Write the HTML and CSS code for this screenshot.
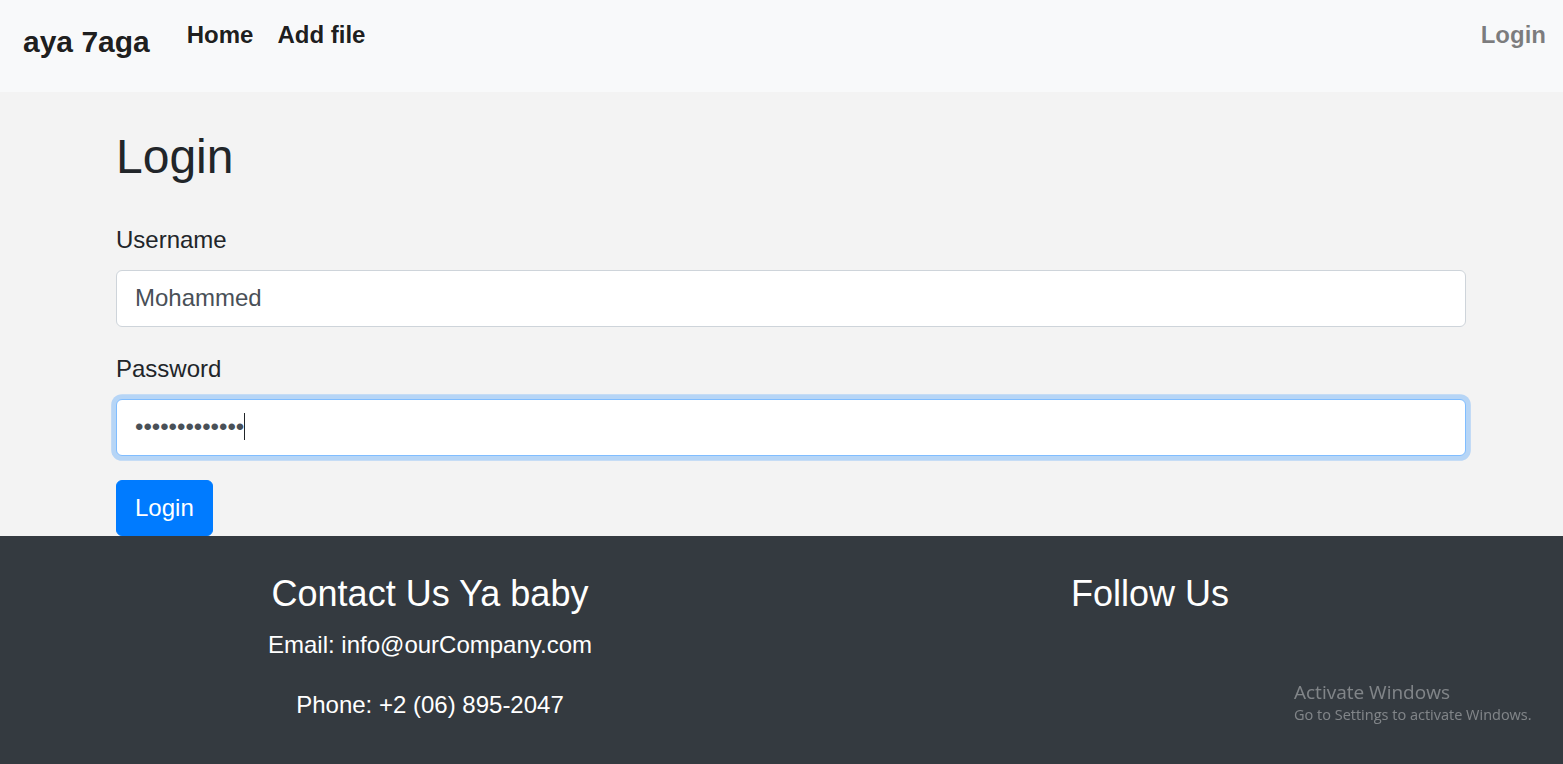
FILE: index.html
```html
<!DOCTYPE html>
<html lang="en">
<head>
<meta charset="utf-8">
<title>Login</title>
<link rel="stylesheet" href="styles.css">
</head>
<body>
<nav class="navbar">
  <a class="brand" href="#">aya 7aga</a>
  <ul class="nav-links">
    <li><a class="nav-link" href="#">Home</a></li>
    <li><a class="nav-link" href="#">Add file</a></li>
  </ul>
  <a class="nav-link nav-login" href="#">Login</a>
</nav>
<main class="main">
  <div class="container">
    <h2 class="title">Login</h2>
    <form class="form">
      <div class="form-group">
        <label class="label" for="username">Username</label>
        <input class="input" id="username" type="text" value="Mohammed">
      </div>
      <div class="form-group">
        <label class="label" for="password">Password</label>
        <div class="input-wrap">
          <input class="input input-focus" id="password" type="password" value="aaaaaaaaaaaaa">
          <span class="caret"></span>
        </div>
      </div>
      <button class="btn" type="button">Login</button>
    </form>
  </div>
</main>
<footer class="footer">
  <div class="footer-grid">
    <div class="footer-col">
      <h3 class="footer-title">Contact Us Ya baby</h3>
      <p class="footer-text">Email: info@ourCompany.com</p>
      <p class="footer-text">Phone: +2 (06) 895-2047</p>
    </div>
    <div class="footer-col">
      <h3 class="footer-title">Follow Us</h3>
    </div>
  </div>
</footer>
<div class="watermark">
  <div class="wm-title">Activate Windows</div>
  <div class="wm-sub">Go to Settings to activate Windows.</div>
</div>
</body>
</html>
```

FILE: styles.css
```css
* { box-sizing: border-box; }
html, body {
  margin: 0;
  padding: 0;
}
body {
  min-height: 100vh;
  display: flex;
  flex-direction: column;
  font-family: "Liberation Sans", Arial, sans-serif;
  font-size: 24px;
  line-height: 1.5;
  color: #212529;
  background: #f3f3f3;
}
.navbar {
  display: flex;
  align-items: flex-start;
  height: 92px;
  flex-shrink: 0;
  padding: 0 17px 0 23px;
  background: #f8f9fa;
}
.brand {
  font-size: 30px;
  font-weight: 700;
  line-height: 45px;
  padding-top: 19px;
  margin-right: 25px;
  color: rgba(0, 0, 0, 0.9);
  text-decoration: none;
  white-space: nowrap;
}
.nav-links {
  display: flex;
  list-style: none;
  margin: 0;
  padding: 0;
  flex: 1;
}
.nav-link {
  display: block;
  font-size: 24px;
  font-weight: 700;
  line-height: 36px;
  padding: 17px 12px 0;
  color: rgba(0, 0, 0, 0.9);
  text-decoration: none;
}
.nav-login {
  color: rgba(0, 0, 0, 0.5);
  padding-right: 0;
}
.main {
  padding-top: 36px;
}
.container {
  margin-left: 116px;
  width: 1350px;
}
.title {
  font-size: 48px;
  font-weight: 400;
  line-height: 1.2;
  margin: 0 0 12px;
}
.form {
  margin-top: 36px;
}
.form-group {
  margin-bottom: 24px;
}
.label {
  display: block;
  margin-bottom: 12px;
  line-height: 36px;
}
.input-wrap {
  position: relative;
}
.input {
  display: block;
  width: 100%;
  height: 57px;
  padding: 9px 18px;
  font-family: "Liberation Sans", Arial, sans-serif;
  font-size: 24px;
  line-height: 36px;
  color: #495057;
  background: #fff;
  border: 1.5px solid #ced4da;
  border-radius: 6px;
  outline: none;
}
.input-focus,
.input:focus {
  border-color: #80bdff;
  box-shadow: 0 0 0 4.8px rgba(0, 123, 255, 0.25);
}
.caret {
  position: absolute;
  left: 128px;
  top: 14px;
  width: 1px;
  height: 27px;
  background: #212529;
}
.btn {
  display: block;
  height: 56px;
  padding: 0 18px;
  font-family: "Liberation Sans", Arial, sans-serif;
  font-size: 24px;
  line-height: 36px;
  color: #fff;
  background: #007bff;
  border: 1.5px solid #007bff;
  border-radius: 6px;
  cursor: pointer;
}
.footer {
  flex: 1;
  background: #343a40;
  color: #fff;
  padding: 36px 0 17px 70px;
}
.footer-grid {
  display: grid;
  grid-template-columns: 720px 720px;
}
.footer-col {
  text-align: center;
}
.footer-title {
  font-size: 36px;
  font-weight: 400;
  line-height: 1.2;
  margin: 0 0 12px;
}
.footer-text {
  margin: 0 0 24px;
  line-height: 36px;
}
.watermark {
  position: fixed;
  left: 1294px;
  top: 681px;
  font-family: "Open Sans", "Noto Sans", sans-serif;
  color: rgba(255, 255, 255, 0.38);
  line-height: 1.2;
}
.wm-title {
  font-size: 19px;
}
.wm-sub {
  font-size: 14.5px;
  margin-top: 2px;
}
```
